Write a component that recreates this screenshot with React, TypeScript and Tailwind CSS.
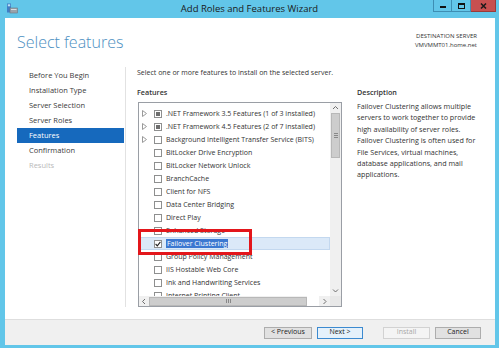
import React from "react";

type Feature = { label: string; expand?: boolean; partial?: boolean; checked?: boolean; selected?: boolean };

const features: Feature[] = [
  { label: ".NET Framework 3.5 Features (1 of 3 installed)", expand: true, partial: true },
  { label: ".NET Framework 4.5 Features (2 of 7 installed)", expand: true, partial: true },
  { label: "Background Intelligent Transfer Service (BITS)", expand: true },
  { label: "BitLocker Drive Encryption" },
  { label: "BitLocker Network Unlock" },
  { label: "BranchCache" },
  { label: "Client for NFS" },
  { label: "Data Center Bridging" },
  { label: "Direct Play" },
  { label: "Enhanced Storage" },
  { label: "Failover Clustering", checked: true, selected: true },
  { label: "Group Policy Management" },
  { label: "IIS Hostable Web Core" },
  { label: "Ink and Handwriting Services" },
  { label: "Internet Printing Client" },
];

const nav = [
  { label: "Before You Begin" },
  { label: "Installation Type" },
  { label: "Server Selection" },
  { label: "Server Roles" },
  { label: "Features", active: true },
  { label: "Confirmation" },
  { label: "Results", disabled: true },
];

function Expander() {
  return (
    <svg width="5" height="7" viewBox="0 0 5 7">
      <polygon points="0.5,0.5 4.5,3.5 0.5,6.5" fill="none" stroke="#9a9a9a" strokeWidth="1" />
    </svg>
  );
}

function Checkbox({ partial, checked }: { partial?: boolean; checked?: boolean }) {
  return (
    <div className="w-[8px] h-[8px] border border-[#8e8f8f] bg-white flex items-center justify-center shrink-0">
      {partial && <div className="w-[4px] h-[4px] bg-[#6e6e6e]" />}
      {checked && (
        <svg width="6" height="6" viewBox="0 0 6 6">
          <polyline points="0.6,3 2.3,4.8 5.4,0.8" fill="none" stroke="#222" strokeWidth="1.1" />
        </svg>
      )}
    </div>
  );
}

function Chevron({ dir }: { dir: "up" | "down" | "left" | "right" }) {
  const pts =
    dir === "up"
      ? "1,4 3.5,1.5 6,4"
      : dir === "down"
      ? "1,1.5 3.5,4 6,1.5"
      : dir === "left"
      ? "4,1 1.5,3.5 4,6"
      : "1.5,1 4,3.5 1.5,6";
  const w = dir === "up" || dir === "down" ? 7 : 5.5;
  const h = dir === "up" || dir === "down" ? 5.5 : 7;
  return (
    <svg width={w} height={h} viewBox={`0 0 ${w} ${h}`}>
      <polyline points={pts} fill="none" stroke="#606060" strokeWidth="0.9" />
    </svg>
  );
}

export default function App() {
  return (
    <div className="relative w-[499px] h-[348px] bg-[#62c6e9] flex flex-col overflow-hidden font-['Open_Sans',sans-serif] text-[#1e1e1e]">
      {/* Title bar */}
      <div className="h-[18px] grid grid-cols-[1fr_auto_1fr] shrink-0">
        <div className="flex items-start pl-[6px] pt-[3px]">
          <svg width="12" height="11" viewBox="0 0 12 11">
            <rect x="1" y="0.5" width="4" height="9" fill="#3f7ec6" />
            <rect x="1.8" y="1.3" width="2.4" height="2" fill="#bfe0f5" />
            <rect x="4" y="5" width="7.5" height="5" fill="#9aa3ab" stroke="#6d7780" strokeWidth="0.6" />
            <rect x="5" y="6" width="5.5" height="1" fill="#d8dde2" />
          </svg>
        </div>
        <div className="text-[9.5px] leading-[18px] text-[#1a1a1a]">Add Roles and Features Wizard</div>
        <div className="flex justify-end items-start pr-[3px]">
          <div className="w-[19px] h-[12px] border border-[#3e8eb3] border-t-0 flex items-center justify-center">
            <div className="w-[6px] h-[2px] bg-[#111] mt-[3px]" />
          </div>
          <div className="w-[19px] h-[12px] border border-l-0 border-[#3e8eb3] border-t-0 flex items-center justify-center">
            <div className="w-[7px] h-[6px] border border-[#111] border-t-2" />
          </div>
          <div className="w-[25px] h-[12px] bg-[#c75050] border border-l-0 border-t-0 border-[#9a3a3a] flex items-center justify-center">
            <svg width="7" height="6" viewBox="0 0 7 6">
              <path d="M1 0.5 L6 5.5 M6 0.5 L1 5.5" stroke="#1a1a1a" strokeWidth="1.5" />
            </svg>
          </div>
        </div>
      </div>

      {/* Window body */}
      <div className="flex-1 ml-[5px] mr-[4px] mb-[3px] bg-white flex flex-col">
        <div className="flex-1 flex flex-col">
          {/* Header */}
          <div className="h-[49px] flex justify-between shrink-0">
            <div className="pl-[12px] pt-[14px] text-[16px] leading-[20px] font-light text-[#4d90c2]">Select features</div>
            <div className="pt-[14px] pr-[18px] text-right text-[6px] leading-[9px] text-[#333]">
              <div>DESTINATION SERVER</div>
              <div>VMVMMT01.home.net</div>
            </div>
          </div>

          {/* Columns */}
          <div className="flex-1 flex pb-[12px]">
            {/* Nav */}
            <div className="w-[121px] border-r border-[#e2e2e2] pl-[12px] pr-[1px] pt-[1px] shrink-0">
              {nav.map((n) => (
                <div
                  key={n.label}
                  className={
                    "h-[15px] leading-[15px] pl-[12px] text-[7.5px] " +
                    (n.active ? "bg-[#1669bd] text-white" : n.disabled ? "text-[#b9b9b9]" : "text-[#3a3a3a]")
                  }
                >
                  {n.label}
                </div>
              ))}
            </div>

            {/* Content */}
            <div className="flex-1 flex pl-[11px]">
              <div className="w-[205px] flex flex-col shrink-0">
                <div className="mt-[1px] h-[10px] leading-[10px] text-[7px] text-[#333] whitespace-nowrap">
                  Select one or more features to install on the selected server.
                </div>
                <div className="mt-[9px] h-[10px] leading-[10px] text-[7.2px] font-semibold text-[#333]">Features</div>
                <div className="mt-[5px] ml-[1px] w-[204px] h-[205px] border border-[#9a9ea5] flex flex-col">
                  <div className="flex-1 flex min-h-0">
                    <div className="flex-1 overflow-hidden pt-[4px]">
                      {features.map((f) => (
                        <div
                          key={f.label}
                          className={
                            "h-[13px] flex items-center pl-[2px] border " +
                            (f.selected ? "bg-[#dbe9f8] border-[#c3d8ef]" : "border-transparent")
                          }
                        >
                          <div className="w-[12px] flex items-center">{f.expand && <Expander />}</div>
                          <Checkbox partial={f.partial} checked={f.checked} />
                          <div className="ml-[4px] text-[7px] leading-[10px] whitespace-nowrap">
                            {f.selected ? (
                              <span className="bg-[#3b78d1] text-white px-[1px]">{f.label}</span>
                            ) : (
                              <span className="text-[#333]">{f.label}</span>
                            )}
                          </div>
                        </div>
                      ))}
                    </div>
                    <div className="w-[11px] bg-[#f0f0f0] flex flex-col items-center shrink-0">
                      <div className="h-[10px] w-full flex items-center justify-center">
                        <Chevron dir="up" />
                      </div>
                      <div className="w-[9px] h-[45px] bg-[#cdcdcd] border border-[#b8b8b8] flex flex-col items-center justify-center gap-[1px]">
                        <div className="w-[4px] h-px bg-[#888]" />
                        <div className="w-[4px] h-px bg-[#888]" />
                        <div className="w-[4px] h-px bg-[#888]" />
                      </div>
                      <div className="flex-1" />
                      <div className="h-[10px] w-full flex items-center justify-center">
                        <Chevron dir="down" />
                      </div>
                    </div>
                  </div>
                  <div className="h-[10px] flex shrink-0 bg-[#f0f0f0]">
                    <div className="w-[10px] flex items-center justify-center">
                      <Chevron dir="left" />
                    </div>
                    <div className="w-[158px] h-[9px] mt-[0.5px] bg-[#cdcdcd] border border-[#b8b8b8] flex items-center justify-center gap-[1px]">
                      <div className="w-px h-[4px] bg-[#888]" />
                      <div className="w-px h-[4px] bg-[#888]" />
                      <div className="w-px h-[4px] bg-[#888]" />
                    </div>
                    <div className="flex-1 bg-white" />
                    <div className="w-[11px] flex items-center justify-center">
                      <Chevron dir="right" />
                    </div>
                    <div className="w-[11px] bg-[#e8e8e8]" />
                  </div>
                </div>
              </div>

              {/* Description */}
              <div className="ml-[15px] pt-[20px] text-[7.2px] text-[#333]">
                <div className="leading-[10px] font-semibold">Description</div>
                <div className="mt-[4px] leading-[11.4px]">
                  <div>Failover Clustering allows multiple</div>
                  <div>servers to work together to provide</div>
                  <div>high availability of server roles.</div>
                  <div>Failover Clustering is often used for</div>
                  <div>File Services, virtual machines,</div>
                  <div>database applications, and mail</div>
                  <div>applications.</div>
                </div>
              </div>
            </div>
          </div>
        </div>

        {/* Footer */}
        <div className="h-[26px] bg-[#f0f0f0] border-t border-[#dedede] flex items-center justify-end pr-[14px] shrink-0">
          <div className="w-[48px] h-[12px] bg-[#e1e1e1] border border-[#adadad] flex items-center justify-center text-[7px] text-[#222]">&lt; Previous</div>
          <div className="ml-[5px] w-[46px] h-[12px] bg-[#e5f1fb] border border-[#3c8ad0] flex items-center justify-center text-[7px] text-[#222]">Next &gt;</div>
          <div className="ml-[20px] w-[47px] h-[12px] bg-[#f4f4f4] border border-[#d2d2d2] flex items-center justify-center text-[7px] text-[#a8a8a8]">Install</div>
          <div className="ml-[5px] w-[46px] h-[12px] bg-[#e1e1e1] border border-[#adadad] flex items-center justify-center text-[7px] text-[#222]">Cancel</div>
        </div>
      </div>

      {/* Annotation box */}
      <div className="absolute left-[138px] top-[229px] w-[114px] h-[26px] border-[3px] border-[#e3161b]" />
    </div>
  );
}
